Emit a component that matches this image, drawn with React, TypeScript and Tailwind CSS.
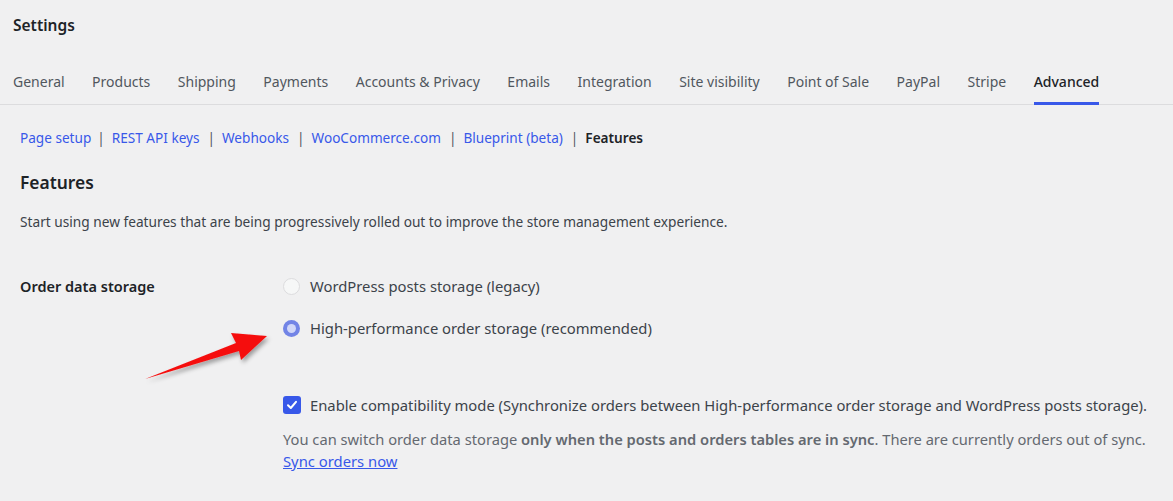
const tabs = [
  'General',
  'Products',
  'Shipping',
  'Payments',
  'Accounts & Privacy',
  'Emails',
  'Integration',
  'Site visibility',
  'Point of Sale',
  'PayPal',
  'Stripe',
  'Advanced',
];

const sections = ['Page setup', 'REST API keys', 'Webhooks', 'WooCommerce.com', 'Blueprint (beta)'];

function Arrow() {
  return (
    <svg
      className="absolute left-[140px] top-[328px] pointer-events-none"
      width="135"
      height="60"
      viewBox="140 328 135 60"
    >
      <defs>
        <filter id="sh" x="-20%" y="-20%" width="140%" height="160%">
          <feDropShadow dx="2" dy="3" stdDeviation="2" floodColor="#000" floodOpacity="0.35" />
        </filter>
      </defs>
      <polygon
        points="145,379 236,343 231,333 267,336 241,360 239,351"
        fill="#f50f0f"
        filter="url(#sh)"
      />
    </svg>
  );
}

export default function App() {
  return (
    <div className="relative min-h-[501px] w-full bg-[#f0f0f1] text-[#1d2327] font-['Noto_Sans',sans-serif] text-[14px]">
      <div className="px-[13px] pt-[14px] text-[15.5px] font-semibold leading-[22px]">Settings</div>

      <div className="mt-[35px] flex gap-[27.5px] border-b border-[#dcdcde] px-[13px] leading-[21px]">
        {tabs.map((t) =>
          t === 'Advanced' ? (
            <div key={t} className="border-b-[3px] border-[#3858e9] pb-[9px] -mb-px text-[#1d2327] font-medium">
              {t}
            </div>
          ) : (
            <div key={t} className="pb-[12px] text-[#50575e]">
              {t}
            </div>
          )
        )}
      </div>

      <div className="px-[20px]">
        <div className="mt-[23px] flex items-center text-[13.6px] leading-[20px]">
          {sections.map((s, i) => (
            <span key={s} className="flex items-center">
              <a className="text-[#3858e9]">{s}</a>
              <span className={i === 0 ? 'ml-[6px] mr-[7px] text-[#50575e]' : 'ml-[8px] mr-[7px] text-[#50575e]'}>|</span>
            </span>
          ))}
          <span className="font-semibold text-[#1d2327]">Features</span>
        </div>

        <h2 className="mt-[22px] text-[17.4px] font-semibold leading-[24px]">Features</h2>
        <p className="mt-[18px] text-[13.7px] leading-[20px] text-[#3c434a]">
          Start using new features that are being progressively rolled out to improve the store management experience.
        </p>

        <div className="mt-[44px] flex">
          <div className="w-[263px] shrink-0 text-[14.5px] font-semibold leading-[20px]">Order data storage</div>
          <div className="flex flex-col text-[14.8px]">
            <label className="flex items-center gap-[10px] leading-[20px] text-[#3c434a]">
              <span className="h-[17px] w-[17px] shrink-0 rounded-full border border-[#dcdcde] bg-[#f6f7f7]" />
              WordPress posts storage (legacy)
            </label>
            <label className="mt-[22px] flex items-center gap-[10px] leading-[20px] text-[#3c434a]">
              <span className="flex h-[17px] w-[17px] shrink-0 items-center justify-center rounded-full bg-[#7284e6]">
                <span className="h-[9px] w-[9px] rounded-full bg-[#d1d7f8]" />
              </span>
              High-performance order storage (recommended)
            </label>

            <label className="mt-[57px] flex items-center gap-[9px] leading-[20px] text-[#3c434a]">
              <span className="flex h-[18px] w-[18px] shrink-0 items-center justify-center rounded-[3px] bg-[#3858e9]">
                <svg width="12" height="12" viewBox="0 0 12 12">
                  <path d="M2 6.3 L4.8 9 L10 2.8" fill="none" stroke="#fff" strokeWidth="2" strokeLinecap="round" strokeLinejoin="round" />
                </svg>
              </span>
              Enable compatibility mode (Synchronize orders between High-performance order storage and WordPress posts storage).
            </label>
            <p className="mt-[13px] text-[14.7px] leading-[22px] text-[#646970]">
              You can switch order data storage <b className="font-semibold">only when the posts and orders tables are in sync</b>. There are currently orders out of sync.
            </p>
            <a className="underline text-[#3858e9] leading-[22px] w-fit">Sync orders now</a>
          </div>
        </div>
      </div>

      <Arrow />
    </div>
  );
}
